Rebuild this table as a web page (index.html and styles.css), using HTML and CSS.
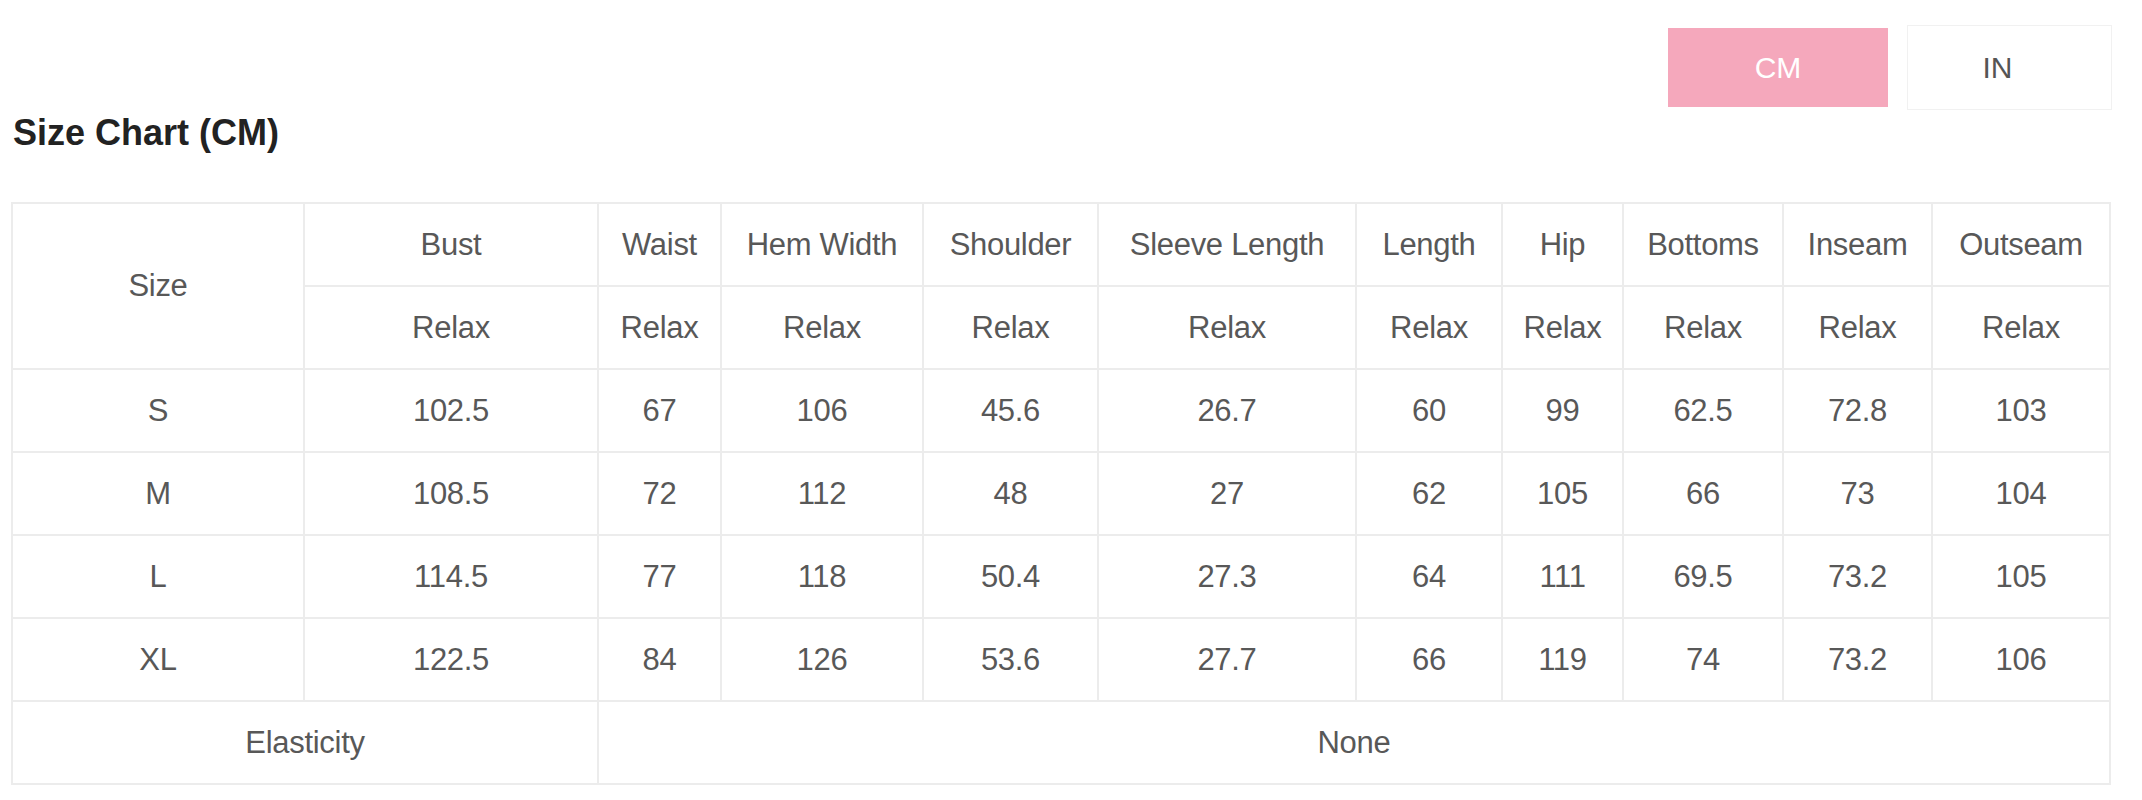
FILE: index.html
```html
<!DOCTYPE html>
<html lang="en">
<head>
<meta charset="utf-8">
<title>Size Chart</title>
<link rel="stylesheet" href="styles.css">
</head>
<body>
<div class="page">
  <div class="unit-toggle">
    <button class="unit-btn unit-btn--active" type="button">CM</button>
    <button class="unit-btn unit-btn--idle" type="button">IN</button>
  </div>
  <h2 class="chart-title">Size Chart (CM)</h2>
  <table class="size-table">
    <colgroup>
      <col class="c-size">
      <col class="c-bust">
      <col class="c-waist">
      <col class="c-hem">
      <col class="c-shoulder">
      <col class="c-sleeve">
      <col class="c-length">
      <col class="c-hip">
      <col class="c-bottoms">
      <col class="c-inseam">
      <col class="c-outseam">
    </colgroup>
    <thead>
      <tr>
        <th rowspan="2">Size</th>
        <th>Bust</th>
        <th>Waist</th>
        <th>Hem Width</th>
        <th>Shoulder</th>
        <th>Sleeve Length</th>
        <th>Length</th>
        <th>Hip</th>
        <th>Bottoms</th>
        <th>Inseam</th>
        <th>Outseam</th>
      </tr>
      <tr>
        <th>Relax</th>
        <th>Relax</th>
        <th>Relax</th>
        <th>Relax</th>
        <th>Relax</th>
        <th>Relax</th>
        <th>Relax</th>
        <th>Relax</th>
        <th>Relax</th>
        <th>Relax</th>
      </tr>
    </thead>
    <tbody>
      <tr>
        <td>S</td><td>102.5</td><td>67</td><td>106</td><td>45.6</td><td>26.7</td><td>60</td><td>99</td><td>62.5</td><td>72.8</td><td>103</td>
      </tr>
      <tr>
        <td>M</td><td>108.5</td><td>72</td><td>112</td><td>48</td><td>27</td><td>62</td><td>105</td><td>66</td><td>73</td><td>104</td>
      </tr>
      <tr>
        <td>L</td><td>114.5</td><td>77</td><td>118</td><td>50.4</td><td>27.3</td><td>64</td><td>111</td><td>69.5</td><td>73.2</td><td>105</td>
      </tr>
      <tr>
        <td>XL</td><td>122.5</td><td>84</td><td>126</td><td>53.6</td><td>27.7</td><td>66</td><td>119</td><td>74</td><td>73.2</td><td>106</td>
      </tr>
      <tr>
        <td colspan="2">Elasticity</td>
        <td colspan="9">None</td>
      </tr>
    </tbody>
  </table>
</div>
</body>
</html>
```

FILE: styles.css
```css
html, body {
  margin: 0;
  padding: 0;
  background: #ffffff;
}

.page {
  font-family: "Liberation Sans", Arial, sans-serif;
  color: #555555;
}

.unit-toggle {
  display: flex;
  justify-content: flex-end;
  align-items: center;
  gap: 19px;
  padding: 25px 30px 0 0;
}

.unit-btn {
  font-family: "Liberation Sans", Arial, sans-serif;
  font-size: 30px;
  border: 1px solid #f1f1f1;
  background: #ffffff;
  color: #555555;
  width: 205px;
  height: 85px;
  padding: 0;
  margin: 0;
}

.unit-btn--idle {
  padding-right: 24px;
}

.unit-btn--active {
  background: #f5a8bc;
  border-color: #f5a8bc;
  color: #ffffff;
  width: 220px;
  height: 79px;
}

.chart-title {
  margin: 5px 0 0 0;
  padding-left: 13px;
  font-size: 36px;
  line-height: 36px;
  font-weight: bold;
  color: #222222;
}

.size-table {
  margin: 51px 0 0 11px;
  width: 2098px;
  border-collapse: collapse;
  table-layout: fixed;
  border: 2px solid #e9e9e9;
}

.size-table th,
.size-table td {
  border: 2px solid #ececec;
  height: 81px;
  padding: 0;
  text-align: center;
  vertical-align: middle;
  font-size: 31px;
  letter-spacing: -0.3px;
  font-weight: normal;
  color: #585858;
}

.c-size { width: 292px; }
.c-bust { width: 294px; }
.c-waist { width: 123px; }
.c-hem { width: 202px; }
.c-shoulder { width: 175px; }
.c-sleeve { width: 258px; }
.c-length { width: 146px; }
.c-hip { width: 121px; }
.c-bottoms { width: 160px; }
.c-inseam { width: 149px; }
.c-outseam { width: 178px; }
```
